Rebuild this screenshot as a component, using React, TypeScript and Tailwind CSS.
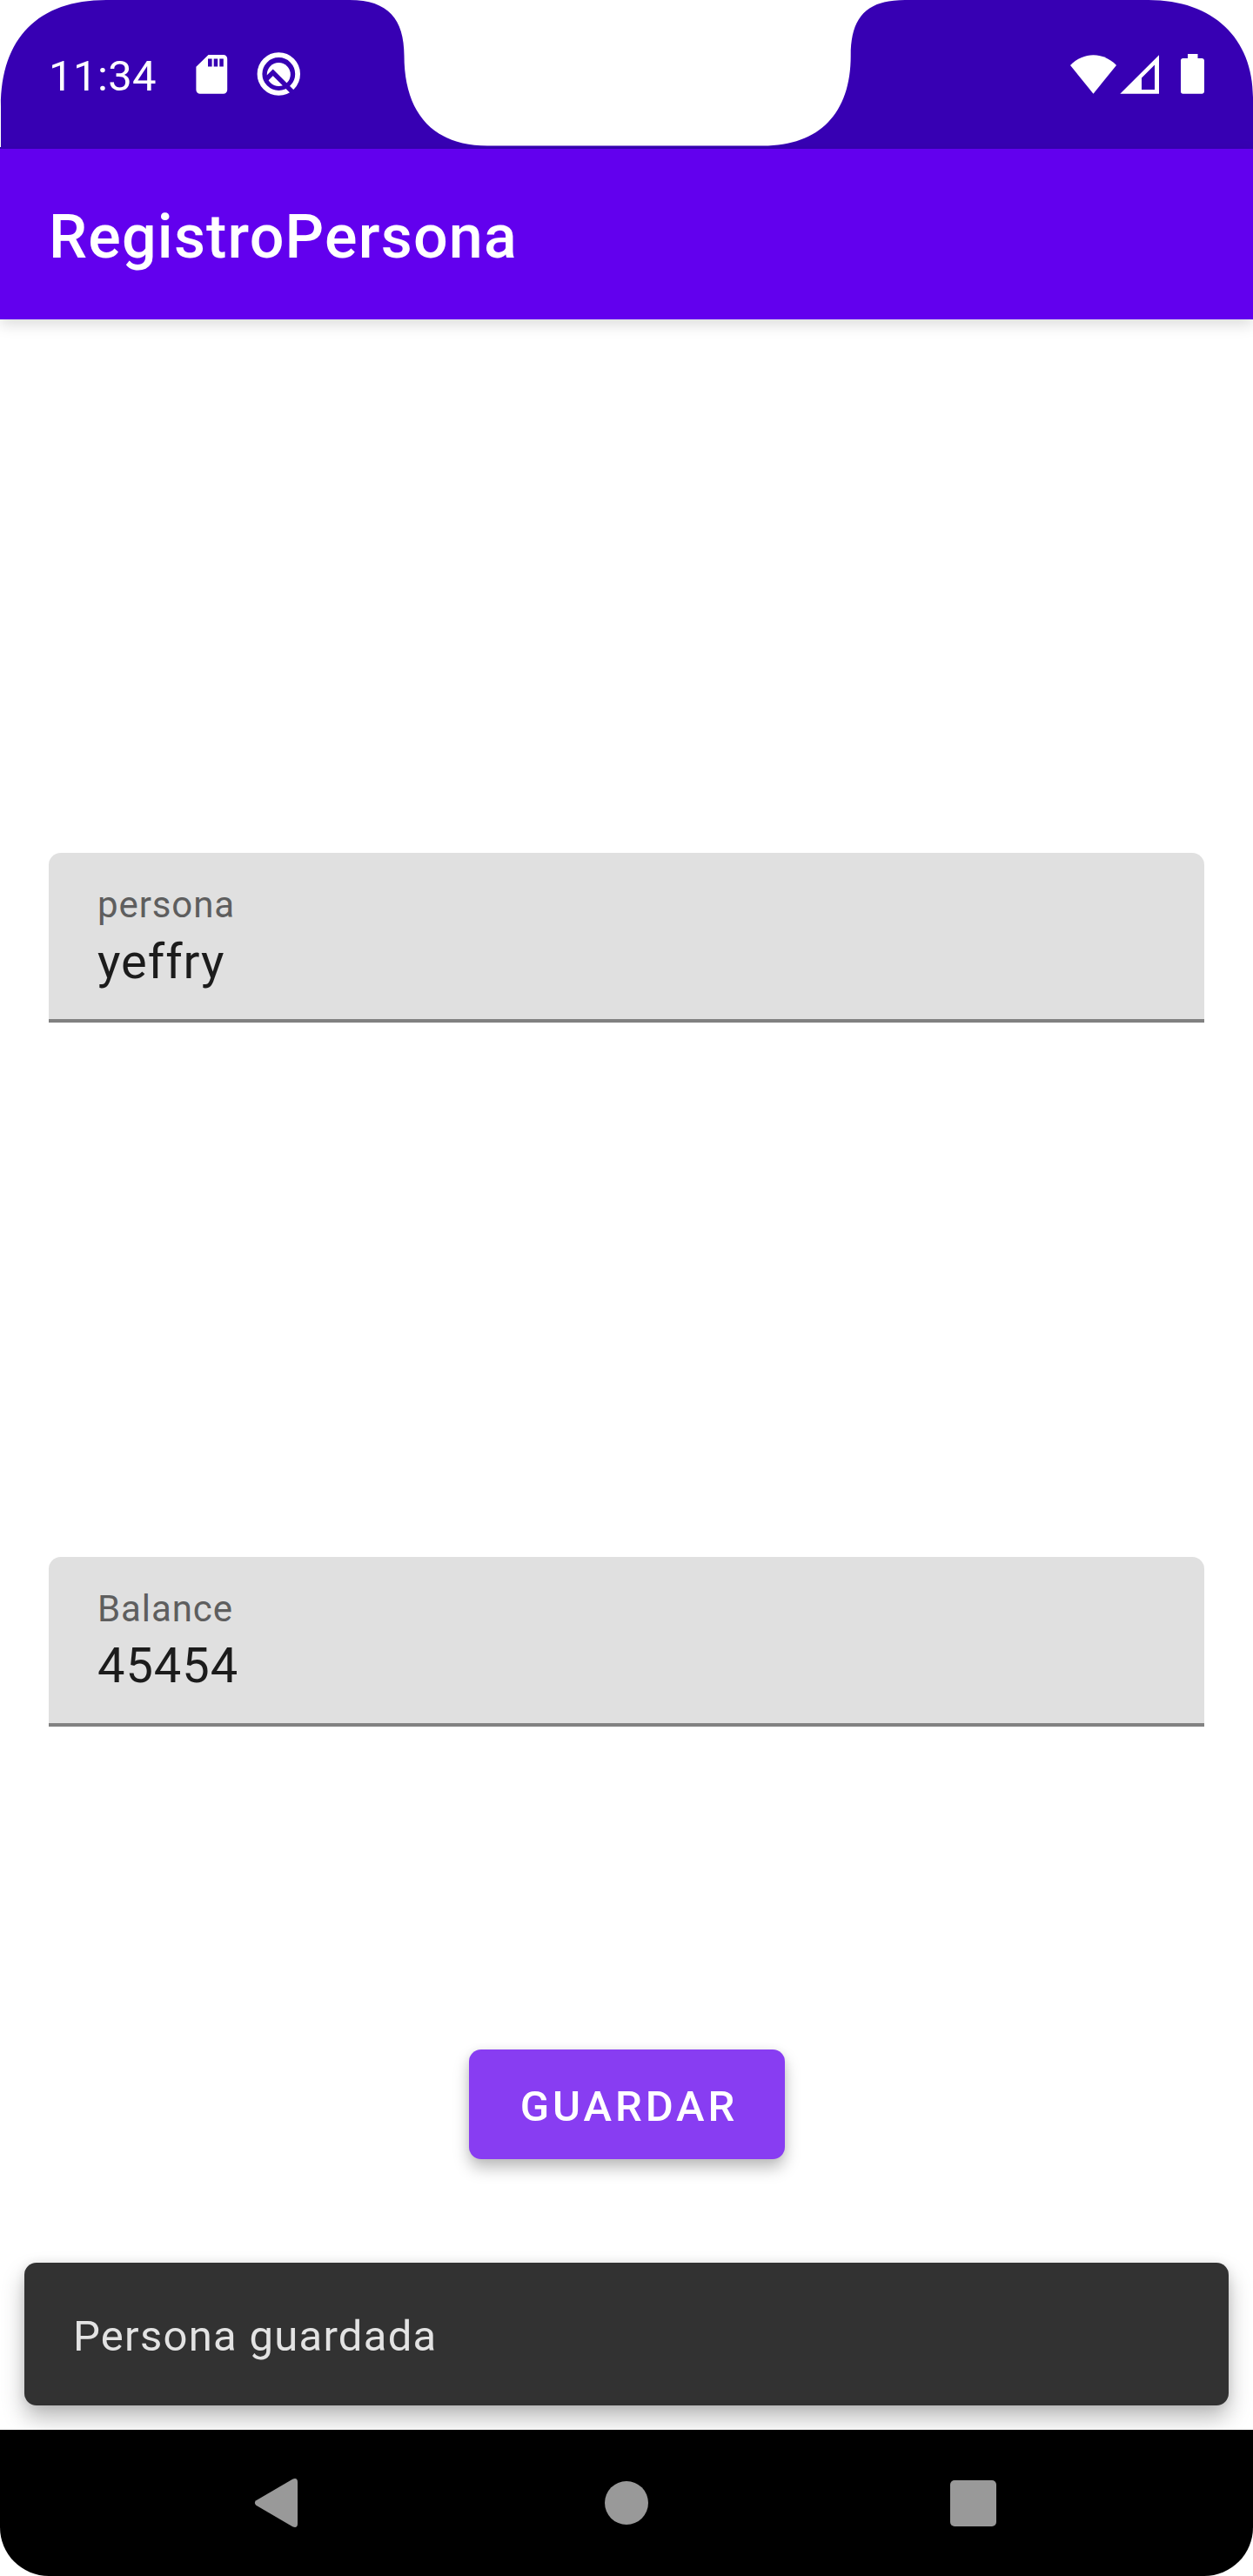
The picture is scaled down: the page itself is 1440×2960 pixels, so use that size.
import React from "react";

function StatusIconsLeft() {
  return (
    <svg className="h-[60px] w-[140px]" viewBox="215 55 140 60" fill="#fff">
      <path
        fillRule="evenodd"
        d="M239.5 63H256.7A4.5 4.5 0 0 1 261.2 67.5V103.2A4.5 4.5 0 0 1 256.7 107.7H229.9A4.5 4.5 0 0 1 225.4 103.2V76.7ZM239 67.6V76.6H243.6V67.6ZM245.7 67.6V76.6H250.2V67.6ZM252.3 67.6V76.6H256.8V67.6Z"
      />
      <circle cx="320.3" cy="85" r="21.8" fill="none" stroke="#fff" strokeWidth="5.8" />
      <circle cx="320.3" cy="85.5" r="13.5" />
      <path d="M304.5 92.500 313.700 83.300 338.500 108.100" fill="none" stroke="#3700b3" strokeWidth="5.4" />
    </svg>
  );
}

function StatusIconsRight() {
  return (
    <svg className="h-[60px] w-[160px]" viewBox="1228 55 160 60" fill="#fff">
      <path d="M1230 75C1245.500 59.400 1267.500 59.400 1283 75L1256.500 107.700Z" />
      <path fillRule="evenodd" d="M1287.300 107.700H1332V63.300ZM1327 74.500V103H1312V89.500Z" />
      <path d="M1365 62H1376.500V67H1381.500A2.600 2.600 0 0 1 1384 69.600V105.100A2.600 2.600 0 0 1 1381.500 107.700H1359.600A2.600 2.600 0 0 1 1357 105.100V69.600A2.600 2.600 0 0 1 1359.600 67H1365Z" />
    </svg>
  );
}

function StatusBar() {
  return (
    <header className="relative flex h-[171px] items-start justify-between bg-[#3700b3] pr-[52px] pl-14 pt-[55px] text-white">
      {/* Rounded display corners and camera notch */}
      <svg className="absolute inset-0 h-[171px] w-[1440px]" viewBox="0 0 1440 171" fill="#fff">
        <path d="M0 0H122C44 0 1 44 1 122V169H0Z" />
        <path d="M1440 0H1320C1394 0 1440 44 1440 112Z" />
        <path d="M402 0C446 0 464.500 22 464.500 64C464.500 130 498 167.500 560 167.500H877C942 167.500 977.700 130 977.700 64C977.700 22 994 0 1040 0Z" />
      </svg>
      <div className="relative flex">
        <span className="w-[159px] text-[49px] leading-[66px] tracking-[0.4px]">11:34</span>
        <StatusIconsLeft />
      </div>
      <div className="relative">
        <StatusIconsRight />
      </div>
    </header>
  );
}

function FilledField({ label, value }: { label: string; value: string }) {
  return (
    <div className="mx-14 h-[195px] rounded-t-[14px] border-b-4 border-[#818181] bg-[#e0e0e0] px-14 pt-8">
      <div className="text-[42px] leading-[56px] tracking-[0.9px] text-[#5e5e5e]">{label}</div>
      <div className="text-[56px] leading-[74px] tracking-[0.95px] text-[#1c1c1c]">{value}</div>
    </div>
  );
}

function NavigationBar() {
  return (
    <nav className="relative flex h-[168px] items-center bg-white">
      <div className="flex h-full w-full items-center rounded-b-[56px] bg-black pl-[290px]">
        <svg className="h-14 w-14" viewBox="290 2848 56 56" fill="#999">
          <path d="M294.300 2873.300 336.200 2848.700Q341.900 2846.500 342 2852V2900Q341.900 2905.500 336.200 2903.300L294.300 2878.700Q291.300 2876 294.300 2873.300Z" />
        </svg>
        <div className="ml-[349px] size-[50px] rounded-full bg-[#999]" />
        <div className="ml-[347px] size-[53px] rounded-[5px] bg-[#999]" />
      </div>
    </nav>
  );
}

export default function App() {
  return (
    <div className="flex h-[2960px] w-[1440px] flex-col overflow-hidden bg-white font-[Roboto,sans-serif]">
      <StatusBar />
      <div className="relative h-[196px] bg-[#6200ee] px-14 pt-[3px] shadow-[0_6px_16px_rgba(0,0,0,0.14)]">
        <h1 className="text-[70px] leading-[196px] font-medium tracking-[1.2px] text-white">RegistroPersona</h1>
      </div>
      <main className="flex flex-1 flex-col pt-[613px]">
        <FilledField label="persona" value="yeffry" />
        <div className="h-[614px]" />
        <FilledField label="Balance" value="45454" />
        <button className="mt-[371px] ml-[539px] h-[126px] w-[363px] rounded-[14px] bg-[#883df2] pt-[6px] pl-[5px] text-[49px] leading-[120px] font-medium tracking-[3.95px] text-white shadow-[0_10px_18px_rgba(0,0,0,0.26),0_0_10px_rgba(0,0,0,0.06)]">
          GUARDAR
        </button>
        <div className="mx-7 mt-[119px] h-[164px] rounded-[14px] bg-[#323232] px-14 pt-[3px] text-[49px] leading-[164px] tracking-[1.27px] text-[#e3e3e3] shadow-[0_14px_26px_rgba(0,0,0,0.28),0_0_12px_rgba(0,0,0,0.08)]">
          Persona guardada
        </div>
      </main>
      <NavigationBar />
    </div>
  );
}
